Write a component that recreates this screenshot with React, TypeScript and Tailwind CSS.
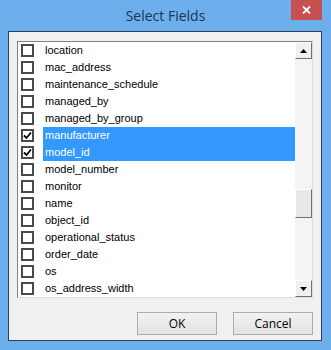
import React, { useState } from "react";

const fields = [
  "location",
  "mac_address",
  "maintenance_schedule",
  "managed_by",
  "managed_by_group",
  "manufacturer",
  "model_id",
  "model_number",
  "monitor",
  "name",
  "object_id",
  "operational_status",
  "order_date",
  "os",
  "os_address_width",
];

function CheckBox({ checked }: { checked: boolean }) {
  return (
    <div className="w-[13px] h-[13px] border-2 border-[#4a4a4a] bg-white flex items-center justify-center shrink-0">
      {checked && (
        <svg width="9" height="9" viewBox="0 0 9 9">
          <path d="M1 4.5 L3.5 7 L8 1.5" stroke="#000" strokeWidth="1.8" fill="none" />
        </svg>
      )}
    </div>
  );
}

function ArrowButton({ up }: { up: boolean }) {
  return (
    <div className="h-[17px] w-[17px] bg-[#f0f0f0] border border-t-white border-l-white border-r-[#707070] border-b-[#707070] flex items-center justify-center">
      <svg width="7" height="4" viewBox="0 0 7 4">
        <path d={up ? "M0 4 L3.5 0 L7 4 Z" : "M0 0 L3.5 4 L7 0 Z"} fill="#000" />
      </svg>
    </div>
  );
}

export default function App() {
  const [checked, setChecked] = useState<string[]>(["manufacturer", "model_id"]);

  const toggle = (f: string) =>
    setChecked((prev) => (prev.includes(f) ? prev.filter((x) => x !== f) : [...prev, f]));

  return (
    <div
      className="w-[331px] h-[350px] bg-[#6cafec] flex flex-col overflow-hidden"
      style={{ fontFamily: "'Liberation Sans', Arial, sans-serif" }}
    >
      {/* Title bar */}
      <div className="relative h-[31px] shrink-0 flex items-center justify-center">
        <span
          className="text-[14px] text-[#1b3450] mt-[-1px]"
          style={{ fontFamily: "'Open Sans', 'Noto Sans', sans-serif" }}
        >
          Select Fields
        </span>
        <div className="absolute right-[9px] top-0 w-[31px] h-[20px] bg-[#c75050] flex items-center justify-center">
          <svg width="9" height="8" viewBox="0 0 9 8">
            <path d="M1 0.5 L8 7.5 M8 0.5 L1 7.5" stroke="#fff" strokeWidth="1.8" />
          </svg>
        </div>
      </div>

      {/* Client area */}
      <div className="ml-[8px] mr-[9px] mb-[9px] flex-1 border border-[#26435f] bg-[#f0f0f0] flex flex-col">
        <div className="mt-[9px] mx-[8px] h-[257px] border border-t-[#828282] border-l-[#828282] border-r-[#dcdcdc] border-b-[#dcdcdc] bg-white flex">
          <div className="flex-1 flex flex-col">
            {fields.map((f) => {
              const on = checked.includes(f);
              return (
                <div
                  key={f}
                  className="h-[17px] flex items-center cursor-default"
                  onClick={() => toggle(f)}
                >
                  <div className="pl-[3px] w-[25px] flex items-center">
                    <CheckBox checked={on} />
                  </div>
                  <div
                    className={`flex-1 h-full flex items-center pl-[2px] text-[11px] ${
                      on ? "bg-[#3399ff] text-white" : "text-black"
                    }`}
                  >
                    {f}
                  </div>
                </div>
              );
            })}
          </div>
          {/* Scrollbar */}
          <div className="w-[17px] flex flex-col bg-[#f4f4f4]">
            <ArrowButton up />
            <div className="flex-1 flex flex-col pt-[130px]">
              <div className="h-[29px] bg-[#e8e8e8] border border-t-white border-l-white border-r-[#707070] border-b-[#707070]" />
            </div>
            <ArrowButton up={false} />
          </div>
        </div>

        <div className="flex justify-end gap-[16px] mt-[14px] mr-[8px]">
          {["OK", "Cancel"].map((label) => (
            <button
              key={label}
              className="w-[80px] h-[23px] border border-[#acacac] bg-gradient-to-b from-[#f2f2f2] to-[#e3e3e3] text-[12px] text-black flex items-center justify-center"
              style={{ fontFamily: "'Open Sans', 'Noto Sans', sans-serif" }}
            >
              {label}
            </button>
          ))}
        </div>
      </div>
    </div>
  );
}
